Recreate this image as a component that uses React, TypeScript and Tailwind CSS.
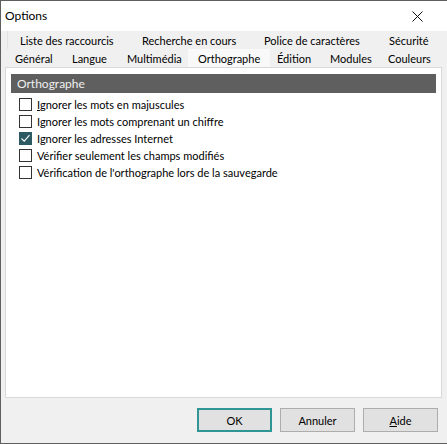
import React from "react";

const row1 = [
  { t: "Liste des raccourcis", w: "w-[123px]", pl: "pl-[12px]" },
  { t: "Recherche en cours", w: "w-[123px]", pl: "pl-[11px]" },
  { t: "Police de caractères", w: "w-[124px]", pl: "pl-[10px]" },
  { t: "Sécurité", w: "w-[63px]", pl: "pl-[11px]" },
];

const row2 = [
  { t: "Général", w: "w-[55px]", pl: "pl-[8px]" },
  { t: "Langue", w: "w-[55px]", pl: "pl-[10px]" },
  { t: "Multimédia", w: "w-[71px]", pl: "pl-[10px]" },
  { t: "Orthographe", w: "w-[82px]", pl: "pl-[10px]", sel: true },
  { t: "Édition", w: "w-[50px]", pl: "pl-[7px]" },
  { t: "Modules", w: "w-[58px]", pl: "pl-[10px]" },
  { t: "Couleurs", w: "w-[62px]", pl: "pl-[10px]" },
];

const items: { label: React.ReactNode; checked: boolean }[] = [
  { label: <><span className="underline">I</span>gnorer les mots en majuscules</>, checked: false },
  { label: <>Ignorer les mots comprenant un chiffre</>, checked: false },
  { label: <>Ignorer les adresses Internet</>, checked: true },
  { label: <>Vérifier seulement les champs modifiés</>, checked: false },
  { label: <>Vérification de l'orthographe lors de la sauvegarde</>, checked: false },
];

function Box({ checked }: { checked: boolean }) {
  return checked ? (
    <div className="w-[13px] h-[13px] bg-[#2b5a63] flex items-center justify-center shrink-0">
      <svg width="11" height="11" viewBox="0 0 11 11">
        <path d="M1.5 5.5 L4.2 8.2 L9.5 2.2" stroke="#ffffff" strokeWidth="1.1" fill="none" />
      </svg>
    </div>
  ) : (
    <div className="w-[13px] h-[13px] border border-[#333333] bg-white shrink-0" />
  );
}

export default function App() {
  return (
    <div
      className="w-[447px] h-[444px] bg-[#f0f0f0] border-l border-t border-b border-[#5f5f5f] flex flex-col text-[11px] text-black"
      style={{ fontFamily: 'Lato, sans-serif' }}
    >
      {/* title bar */}
      <div className="h-[30px] bg-white flex items-center justify-between pl-[4px] pr-[24px] shrink-0">
        <span className="text-[12px] leading-none">Options</span>
        <svg width="11" height="11" viewBox="0 0 11 11">
          <path d="M0.5 0.5 L10.5 10.5 M10.5 0.5 L0.5 10.5" stroke="#111" strokeWidth="1" />
        </svg>
      </div>
      {/* tabs */}
      <div className="flex flex-col pl-[6px] shrink-0">
        <div className="flex h-[18px] items-center border-l border-[#e3e3e3]">
          {row1.map((r) => (
            <div key={r.t} className={`${r.w} ${r.pl} whitespace-nowrap leading-none`}>
              {r.t}
            </div>
          ))}
        </div>
        <div className="flex h-[18px] items-center">
          {row2.map((r) => (
            <div
              key={r.t}
              className={`${r.w} ${r.pl} h-full flex items-center whitespace-nowrap leading-none ${r.sel ? "bg-[#f9f9f9]" : ""}`}
            >
              {r.t}
            </div>
          ))}
        </div>
      </div>
      {/* panel */}
      <div className="ml-[4px] w-[437px] h-[331px] bg-white border border-[#d9d9d9] pt-[6px] px-[5px] shrink-0">
        <div className="h-[19px] bg-[#5f5f5f] text-[#f0f0f0] text-[12px] flex items-center pl-[6px] leading-none">
          Orthographe
        </div>
        <div className="flex flex-col pl-[8px] pt-[3px]">
          {items.map((it, i) => (
            <div key={i} className="h-[17px] flex items-center gap-[5px]">
              <Box checked={it.checked} />
              <span className="text-[11px] leading-none whitespace-nowrap">{it.label}</span>
            </div>
          ))}
        </div>
      </div>
      {/* buttons */}
      <div className="flex justify-end gap-[8px] pr-[9px] pt-[10px]">
        <button className="w-[75px] h-[24px] bg-[#e1e1e1] border-2 border-[#2f9595] text-[11px] leading-none">
          OK
        </button>
        <button className="w-[75px] h-[24px] bg-[#e1e1e1] border border-[#adadad] text-[11px] leading-none">
          Annuler
        </button>
        <button className="w-[75px] h-[24px] bg-[#e1e1e1] border border-[#adadad] text-[11px] leading-none">
          <span className="underline">A</span>ide
        </button>
      </div>
    </div>
  );
}
